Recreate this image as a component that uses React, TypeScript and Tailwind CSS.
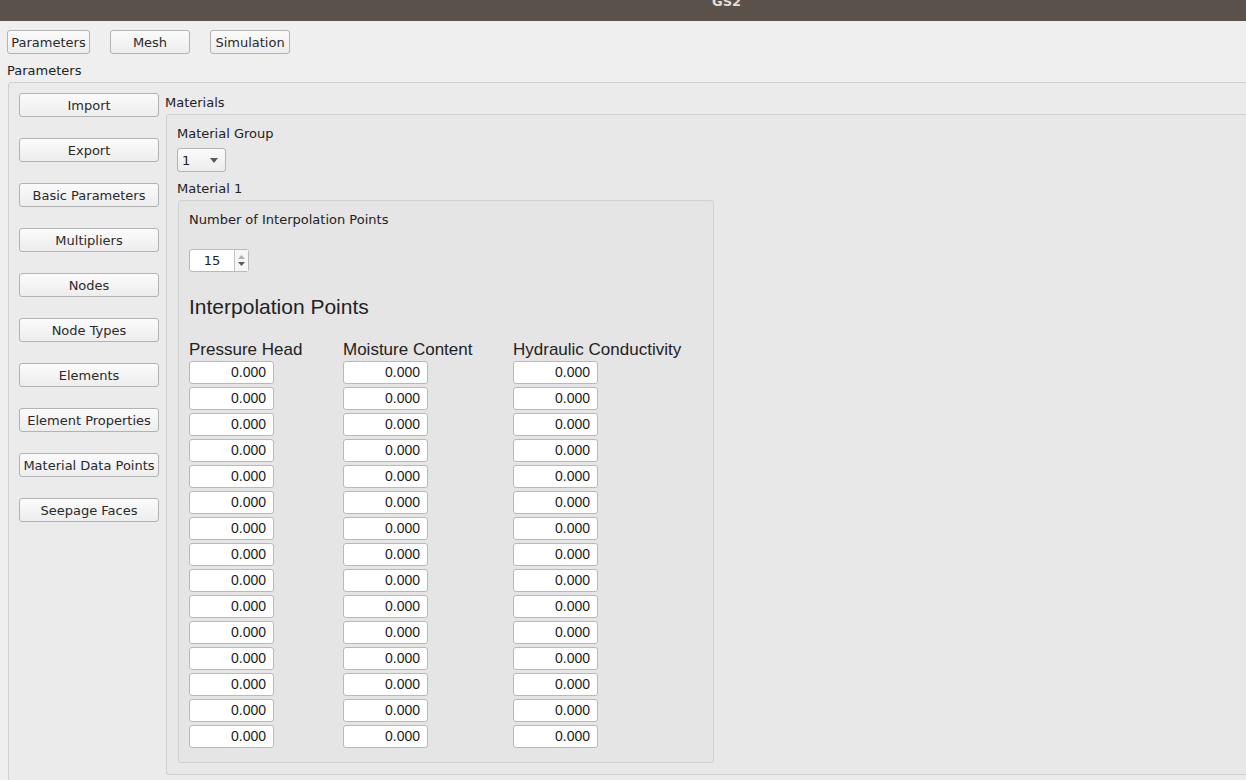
import React from 'react';

const qt = { fontFamily: '"DejaVu Sans", "Liberation Sans", sans-serif' };
const arial = { fontFamily: '"Liberation Sans", Arial, sans-serif' };

const sideButtons = [
  'Import',
  'Export',
  'Basic Parameters',
  'Multipliers',
  'Nodes',
  'Node Types',
  'Elements',
  'Element Properties',
  'Material Data Points',
  'Seepage Faces',
];

const columns = [
  { title: 'Pressure Head', w: 'w-[154px]' },
  { title: 'Moisture Content', w: 'w-[170px]' },
  { title: 'Hydraulic Conductivity', w: 'w-[190px]' },
];

const rows = Array.from({ length: 15 }, (_, i) => i);

function QButton({ label, className = '' }: { label: string; className?: string }) {
  return (
    <button
      className={`h-[24px] rounded-[3px] border border-[#b3b3b3] bg-gradient-to-b from-[#fbfbfb] to-[#ededed] pt-[2px] text-[13px] leading-[16px] text-[#2a2a2a] ${className}`}
    >
      {label}
    </button>
  );
}

function NumberField() {
  return (
    <div
      className="h-[23px] w-[85px] rounded-[3px] border border-[#b9b9b9] bg-white pr-[7px] text-right text-[14px] leading-[21px] text-[#1c1c1c]"
      style={arial}
    >
      0.000
    </div>
  );
}

export default function App() {
  return (
    <div className="h-screen w-full overflow-hidden bg-[#efefef] text-[#222]" style={qt}>
      {/* window title */}
      <div className="h-[21px] w-full overflow-hidden bg-[#5a514b] pl-[712px]">
        <div className="-mt-[6px] text-[13px] font-bold leading-[16px] text-[#e2ddd6]">GS2</div>
      </div>

      {/* tabs */}
      <div className="ml-[7px] mt-[9px] flex gap-[20px]">
        <QButton label="Parameters" className="w-[83px]" />
        <QButton label="Mesh" className="w-[80px]" />
        <QButton label="Simulation" className="w-[80px]" />
      </div>

      <div className="ml-[7px] mt-[8px] h-[16px] text-[13px] leading-[18px]">Parameters</div>

      {/* parameters group */}
      <div className="-mr-[6px] ml-[8px] mt-[4px] flex h-[720px] rounded-[3px] border border-[#d0d0d0] bg-[#ebebeb] pl-[10px] pt-[10px]">
        <div className="flex w-[140px] shrink-0 flex-col gap-[21px]">
          {sideButtons.map((b) => (
            <QButton key={b} label={b} className="w-[140px]" />
          ))}
        </div>

        <div className="ml-[6px] flex flex-1 flex-col pt-[2px]">
          <div className="h-[16px] text-[13px] leading-[16px]">Materials</div>

          <div className="mt-[3px] ml-[1px] h-[661px] rounded-[3px] border border-[#d0d0d0] bg-[#e8e8e8] pl-[10px] pt-[11px]">
            <div className="h-[16px] text-[13px] leading-[16px]">Material Group</div>

            <div className="mt-[6px] flex h-[24px] w-[49px] items-center justify-between rounded-[3px] border border-[#b3b3b3] bg-gradient-to-b from-[#fbfbfb] to-[#ededed] pl-[4px] pr-[7px] pt-[1px] text-[13px]">
              <span>1</span>
              <svg width="8" height="5" viewBox="0 0 8 5">
                <path d="M0 0 L8 0 L4 5 Z" fill="#5a5a5a" />
              </svg>
            </div>

            <div className="mt-[9px] h-[16px] text-[13px] leading-[16px]">Material 1</div>

            <div className="mt-[3px] ml-[1px] h-[563px] w-[536px] rounded-[3px] border border-[#d0d0d0] bg-[#e5e5e5] pl-[10px] pt-[10px]">
              <div className="h-[16px] text-[13px] leading-[18px]">Number of Interpolation Points</div>

              <div className="mt-[22px] flex h-[23px] w-[60px] rounded-[3px] border border-[#b9b9b9] bg-white">
                <div className="flex flex-1 items-center justify-center pt-[1px] text-[13px]">15</div>
                <div className="flex w-[14px] flex-col items-center justify-center gap-[3px] border-l border-[#c4c4c4] bg-[#f6f6f6]">
                  <svg width="7" height="4" viewBox="0 0 7 4">
                    <path d="M0 4 L7 4 L3.5 0 Z" fill="#b0b0b0" />
                  </svg>
                  <svg width="7" height="4" viewBox="0 0 7 4">
                    <path d="M0 0 L7 0 L3.5 4 Z" fill="#5a5a5a" />
                  </svg>
                </div>
              </div>

              <div className="mt-[23px] h-[24px] text-[21px] leading-[24px]" style={arial}>
                Interpolation Points
              </div>

              <div className="mt-[20px] flex">
                {columns.map((c) => (
                  <div key={c.title} className={`flex flex-col ${c.w}`}>
                    <div className="h-[22px] text-[17px] leading-[22px]" style={arial}>
                      {c.title}
                    </div>
                    <div className="flex flex-col gap-[3px]">
                      {rows.map((r) => (
                        <NumberField key={r} />
                      ))}
                    </div>
                  </div>
                ))}
              </div>
            </div>
          </div>
        </div>
      </div>
    </div>
  );
}
